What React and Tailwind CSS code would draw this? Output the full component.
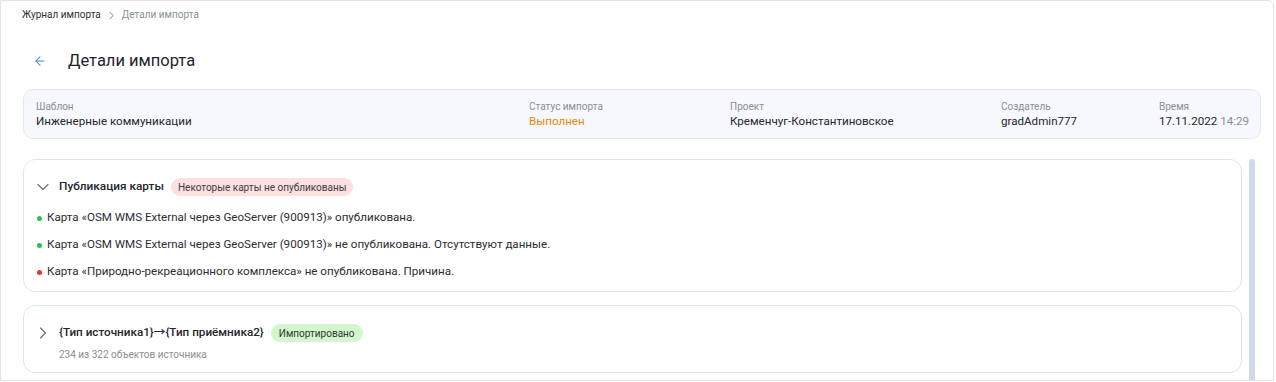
import { ArrowLeft, ChevronDown, ChevronRight } from 'lucide-react'

const FONT = { fontFamily: 'Roboto, "Noto Sans CJK SC", sans-serif' }

const INFO = [
  { label: 'Шаблон', value: 'Инженерные коммуникации', w: 'w-[493px]' },
  { label: 'Статус импорта', value: 'Выполнен', w: 'w-[201px]', cls: 'text-[#e5880c]' },
  { label: 'Проект', value: 'Кременчуг-Константиновское', w: 'w-[271px]' },
  { label: 'Создатель', value: 'gradAdmin777', w: 'w-[158px]' },
]

const MAPS = [
  { ok: true, text: 'Карта «OSM WMS External через GeoServer (900913)» опубликована.' },
  { ok: true, text: 'Карта «OSM WMS External через GeoServer (900913)» не опубликована. Отсутствуют данные.' },
  { ok: false, text: 'Карта «Природно-рекреационного комплекса» не опубликована. Причина.' },
]

export default function App() {
  return (
    <div style={FONT} className="w-[1276px] h-[382px] bg-white overflow-hidden">
      <div className="w-[1274px] h-[381px] border border-[#e2e3e6] rounded-tr-[6px] flex flex-col overflow-hidden">
        {/* Breadcrumbs */}
        <div className="flex items-center pl-[21px] pt-[7px] h-[21px] text-[10px] leading-[14px]">
          <span className="text-[#2b2f36]">Журнал импорта</span>
          <ChevronRight size={13} strokeWidth={1.6} className="text-[#6b7280] mx-[4px]" />
          <span className="text-[#8a909a]">Детали импорта</span>
        </div>

        {/* Title */}
        <div className="flex items-center h-[37px] mt-[20px] pl-[32px]">
          <ArrowLeft size={14} strokeWidth={1.8} className="text-[#3b8ee8]" />
          <h1 className="ml-[21px] text-[16.5px] leading-[22px] text-[#1f2430]">Детали импорта</h1>
        </div>

        {/* Info panel */}
        <div className="ml-[22px] mr-[12px] mt-[10px] h-[50px] rounded-[10px] border border-[#dfe7f5] bg-[#f6f8fd] flex items-center pl-[12px] pt-[1px]">
          {INFO.map(i => (
            <div key={i.label} className={`${i.w} shrink-0`}>
              <div className="text-[10px] leading-[13px] text-[#8b8e94]">{i.label}</div>
              <div className={`text-[11.6px] leading-[16px] ${i.cls || 'text-[#23262d]'}`}>{i.value}</div>
            </div>
          ))}
          <div className="whitespace-nowrap">
            <div className="text-[10px] leading-[13px] text-[#8b8e94]">Время</div>
            <div className="text-[11.6px] leading-[16px] text-[#23262d]">
              17.11.2022 <span className="text-[#8b8e94]">14:29</span>
            </div>
          </div>
        </div>

        {/* Scroll area */}
        <div className="flex flex-1 mt-[20px] pl-[22px] pr-[18px] min-h-0">
          <div className="flex-1 flex flex-col gap-[13px]">
            <div className="rounded-[12px] border border-[#dce4f3] h-[133px] pt-[17px] pl-[9px] shrink-0">
              <div className="flex items-center h-[20px]">
                <ChevronDown size={20} strokeWidth={1.4} className="text-[#6b7079]" />
                <span className="ml-[6px] text-[11.8px] font-medium text-[#23262d]">Публикация карты</span>
                <span className="ml-[7px] px-[7px] h-[18px] flex items-center rounded-full bg-[#fde0df] text-[10px] text-[#3a3d44]">
                  Некоторые карты не опубликованы
                </span>
              </div>
              <div className="mt-[13px] pl-[4px] flex flex-col gap-[11px]">
                {MAPS.map((m, idx) => (
                  <div key={idx} className="flex items-center h-[16px]">
                    <span className={`w-[5px] h-[5px] rounded-full ${m.ok ? 'bg-[#2fbf55]' : 'bg-[#e5322d]'}`} />
                    <span className="ml-[5px] text-[11.6px] text-[#2a2d33]">{m.text}</span>
                  </div>
                ))}
              </div>
            </div>

            <div className="rounded-[12px] border border-[#dce4f3] h-[68px] pt-[17px] pl-[9px] shrink-0">
              <div className="flex items-center h-[20px]">
                <ChevronRight size={20} strokeWidth={1.4} className="text-[#6b7079]" />
                <span className="ml-[6px] text-[11.7px] font-medium text-[#23262d]">{'{Тип источника1}→{Тип приёмника2}'}</span>
                <span className="ml-[7px] px-[8px] h-[18px] flex items-center rounded-full bg-[#d3f6cf] text-[10px] text-[#2d3a2c]">
                  Импортировано
                </span>
              </div>
              <div className="ml-[26px] mt-[5px] text-[10px] leading-[13px] text-[#8b8e94]">234 из 322 объектов источника</div>
            </div>
          </div>
          <div className="w-[6px] ml-[7px] rounded-t-full bg-[#cfd9eb]" />
        </div>
      </div>
    </div>
  )
}
